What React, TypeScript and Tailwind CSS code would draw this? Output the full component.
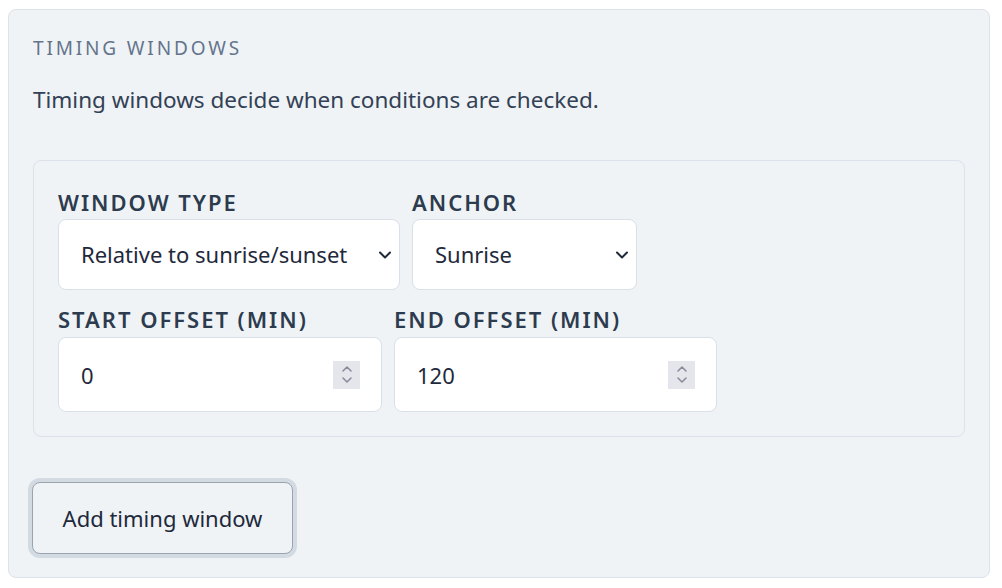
function Chevron() {
  return (
    <svg className="pointer-events-none absolute right-[8px] top-1/2 -translate-y-1/2" width="14" height="10" viewBox="0 0 14 10" fill="none">
      <path d="M2 2.5 L7 7.5 L12 2.5" stroke="#1e293b" strokeWidth="2" strokeLinecap="round" strokeLinejoin="round" />
    </svg>
  )
}

function Spinner() {
  return (
    <div className="pointer-events-none absolute right-[22px] top-1/2 -translate-y-1/2 flex h-[28px] w-[27px] flex-col items-center justify-center gap-[3px] bg-[#e5e6eb]">
      <svg width="12" height="8" viewBox="0 0 12 8" fill="none">
        <path d="M2 6 L6 2 L10 6" stroke="#8b8b9a" strokeWidth="1.6" strokeLinecap="round" strokeLinejoin="round" />
      </svg>
      <svg width="12" height="8" viewBox="0 0 12 8" fill="none">
        <path d="M2 2 L6 6 L10 2" stroke="#8b8b9a" strokeWidth="1.6" strokeLinecap="round" strokeLinejoin="round" />
      </svg>
    </div>
  )
}

const labelCls = "text-[22px] leading-[30px] font-semibold uppercase tracking-[0.09em] text-[#2d3b4e]"
const fieldCls = "w-full rounded-lg border border-[#d9e0e8] bg-white pl-[22px] text-[22px] text-[#1e293b] appearance-none outline-none"

export default function App() {
  return (
    <div className="min-h-screen bg-white pt-[9px] pl-2 font-['Noto_Sans',sans-serif] text-[#334155]">
      <section className="w-[982px] h-[569px] rounded-lg border border-[#dbe2e9] bg-[#eff3f6] px-6 pt-6">
        <h2 className="text-[19px] leading-7 uppercase tracking-[0.15em] text-[#64748b]">Timing windows</h2>
        <p className="mt-[22px] text-[22.5px] leading-8">Timing windows decide when conditions are checked.</p>

        <div className="mt-[44px] rounded-lg border border-[#dbe2e9] px-6 pt-[26px] pb-6">
          <div className="flex gap-3">
            <label className="flex flex-col gap-[2px]">
              <span className={labelCls}>Window type</span>
              <div className="relative w-[342px]">
                <select className={fieldCls + " h-[71px] pr-8"} defaultValue="relative">
                  <option value="relative">Relative to sunrise/sunset</option>
                  <option value="fixed">Fixed time</option>
                </select>
                <Chevron />
              </div>
            </label>
            <label className="flex flex-col gap-[2px]">
              <span className={labelCls}>Anchor</span>
              <div className="relative w-[225px]">
                <select className={fieldCls + " h-[71px] pr-8"} defaultValue="sunrise">
                  <option value="sunrise">Sunrise</option>
                  <option value="sunset">Sunset</option>
                </select>
                <Chevron />
              </div>
            </label>
          </div>
          <div className="mt-[14px] flex gap-3">
            <label className="flex flex-col gap-[3px]">
              <span className={labelCls}>Start offset (min)</span>
              <div className="relative w-[324px]">
                <input type="number" defaultValue={0} className={fieldCls + " h-[75px] pr-14 [appearance:textfield] [&::-webkit-inner-spin-button]:appearance-none"} />
                <Spinner />
              </div>
            </label>
            <label className="flex flex-col gap-[3px]">
              <span className={labelCls}>End offset (min)</span>
              <div className="relative w-[323px]">
                <input type="number" defaultValue={120} className={fieldCls + " h-[75px] pr-14 [appearance:textfield] [&::-webkit-inner-spin-button]:appearance-none"} />
                <Spinner />
              </div>
            </label>
          </div>
        </div>

        <button className="mt-[45px] -ml-px block w-[261px] h-[72px] rounded-lg border border-[#9aa4af] bg-[#eff3f6] text-[22px] text-[#1e293b] shadow-[0_0_0_4px_#d3dae2]">
          Add timing window
        </button>
      </section>
    </div>
  )
}
